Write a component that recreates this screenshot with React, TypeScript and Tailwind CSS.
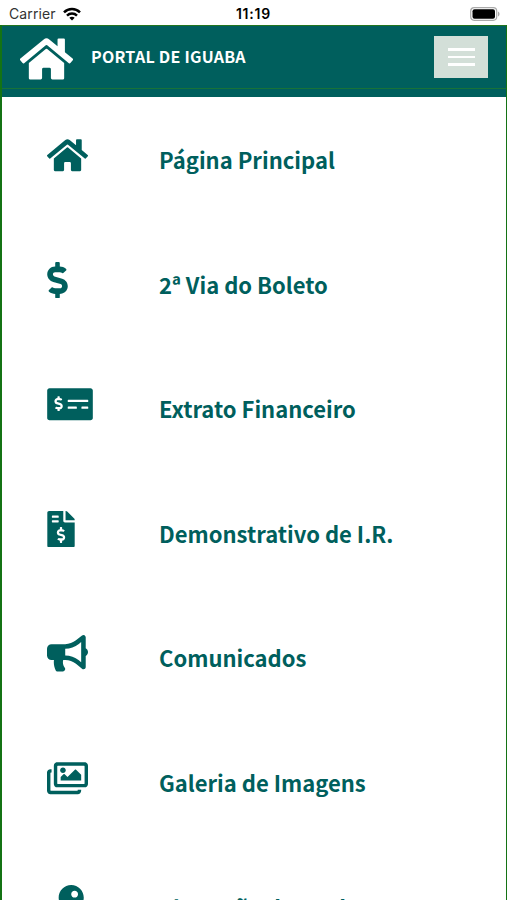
import type { IconType } from 'react-icons'
import {
  FaBullhorn,
  FaDollarSign,
  FaFileInvoiceDollar,
  FaHome,
  FaKey,
  FaMoneyCheckAlt,
  FaRegImages,
} from 'react-icons/fa'

interface MenuItem {
  label: string
  icon: IconType
  iconClass: string
}

const MENU: MenuItem[] = [
  { label: 'Página Principal', icon: FaHome, iconClass: 'w-[41px]' },
  { label: '2ª Via do Boleto', icon: FaDollarSign, iconClass: 'w-[21px]' },
  { label: 'Extrato Financeiro', icon: FaMoneyCheckAlt, iconClass: 'w-[46px]' },
  { label: 'Demonstrativo de I.R.', icon: FaFileInvoiceDollar, iconClass: 'w-[28px]' },
  { label: 'Comunicados', icon: FaBullhorn, iconClass: 'w-[41px]' },
  { label: 'Galeria de Imagens', icon: FaRegImages, iconClass: 'w-[41px]' },
  { label: 'Alteração de Senha', icon: FaKey, iconClass: 'w-[37px]' },
]

function StatusBar() {
  return (
    <div className="grid h-[25px] shrink-0 grid-cols-3 items-center bg-white pl-[9px] pr-[7px] pt-0.5 font-['Inter',sans-serif] text-black">
      <div className="flex items-center gap-[7px]">
        <span className="text-[14px] leading-4 tracking-[0.1px] text-[#333]">Carrier</span>
        <svg className="h-[14px] w-[18px]" viewBox="0 0 18 14" fill="none" stroke="currentColor" strokeWidth="2.5">
          <path d="M1 5.3C5.5.9 12.5.9 17 5.3" />
          <path d="M4 8.6c2.8-2.7 7.2-2.7 10 0" />
          <path d="M6.3 10.7c1.5-1.4 3.9-1.4 5.4 0L9 13.6z" fill="currentColor" stroke="none" />
        </svg>
      </div>
      <span className="-ml-0.5 text-center text-[14px] font-semibold leading-4 tracking-[0.8px]">11:19</span>
      <div className="flex justify-end">
        <svg className="h-[14px] w-[30px]" viewBox="0 0 30 14">
          <rect x="0.7" y="0.7" width="26" height="12.6" rx="3.5" fill="#fff" stroke="#aaa" strokeWidth="1.2" />
          <rect x="2.5" y="2.3" width="22.5" height="9.4" rx="2" />
          <path d="M28 4.5c2 .8 2 4.2 0 5z" fill="#aaa" />
        </svg>
      </div>
    </div>
  )
}

function Header() {
  return (
    <header className="shrink-0 border-t border-[#23751f] bg-[#005f5d]">
      <div className="flex h-[63px] items-center border-b border-[#187238] pl-[18px] pr-[18px]">
        <FaHome className="mt-[3px] h-[48px] w-[53px] text-white" />
        <h1 className="-mt-[2px] ml-[18px] flex-1 text-[16px] font-bold leading-6 tracking-[0.25px] text-white">
          PORTAL DE IGUABA
        </h1>
        <button
          aria-label="Menu"
          className="flex h-[42px] w-[54px] flex-col items-center justify-center gap-[5px] bg-[#d3dfd8]"
        >
          <span className="h-[2.5px] w-[27px] bg-white" />
          <span className="h-[2.5px] w-[27px] bg-white" />
          <span className="h-[2.5px] w-[27px] bg-white" />
        </button>
      </div>
      <div className="h-[8px]" />
    </header>
  )
}

export default function App() {
  return (
    <div className="flex h-[900px] w-[507px] flex-col overflow-hidden bg-white font-['Noto_Sans_CJK_JP',sans-serif]">
      <StatusBar />
      <div className="flex min-h-0 flex-1 flex-col border-l-2 border-r border-[#147314]">
        <Header />
        <nav className="min-h-0 flex-1 overflow-hidden pt-[40px]">
          {MENU.map(({ label, icon: Icon, iconClass }) => (
            <a key={label} href="#" className="flex h-[124.6px] items-start pl-[45px] text-[#005f5d]">
              <span className="w-[112px] shrink-0">
                <Icon className={`h-[36.5px] ${iconClass}`} />
              </span>
              <span className="pt-[6px] text-[22px] font-bold leading-[32px]">{label}</span>
            </a>
          ))}
        </nav>
      </div>
    </div>
  )
}
